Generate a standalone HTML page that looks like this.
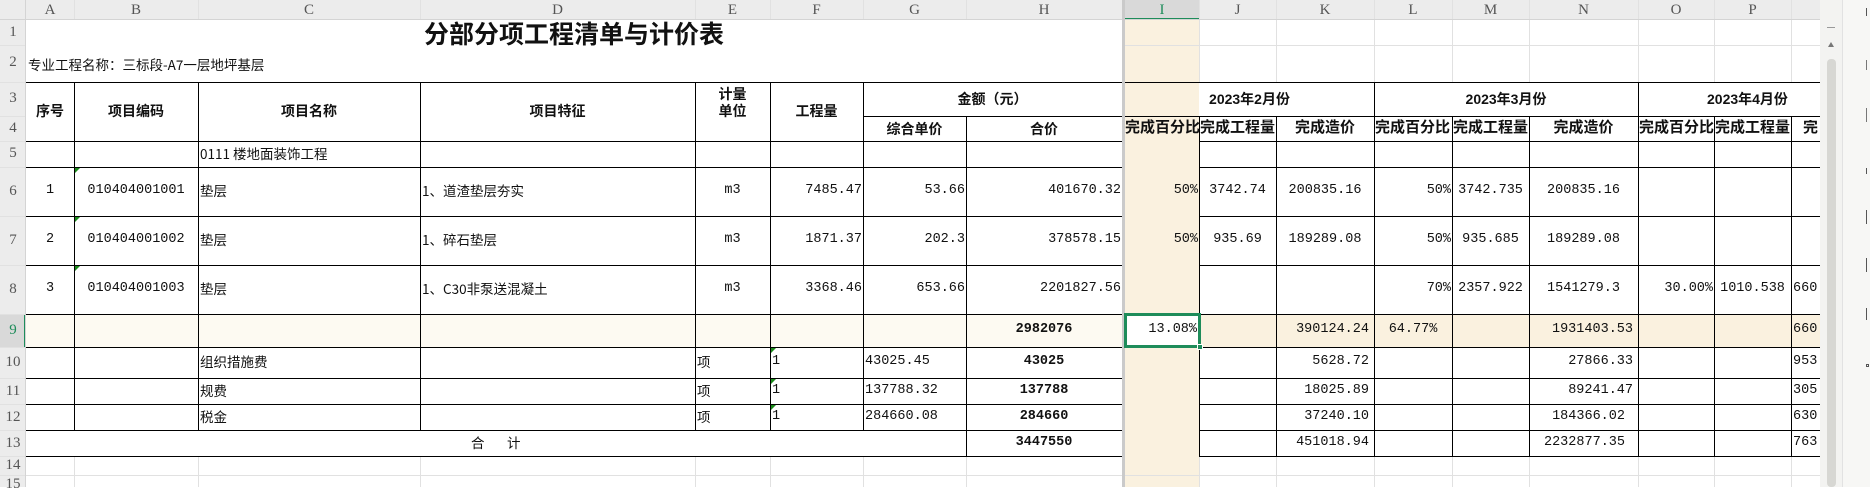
<!DOCTYPE html>
<html><head><meta charset="utf-8"><style>
*{margin:0;padding:0;box-sizing:border-box}
body{width:1870px;height:487px;overflow:hidden;background:#fff;position:relative;font-family:"Liberation Mono","Noto Sans CJK SC",monospace;font-size:13.5px;color:#111}
div{position:absolute}
.g{background:#e1e1e1}
.k{background:#000}
.t{white-space:nowrap;line-height:16px}
.c{text-align:center}
.r{text-align:right}
.b{font-weight:bold;font-family:"Liberation Sans","Noto Sans CJK SC",sans-serif;font-size:14px}
.bn{font-weight:bold}
.cj{font-family:"Noto Sans CJK SC",sans-serif;font-size:13.5px;margin-top:-1px}
.hd{color:#555;font-family:"Liberation Serif",serif;font-size:15px;text-align:center;line-height:20px}
.rn{color:#555;font-family:"Liberation Serif",serif;font-size:15px;text-align:center;width:26px;left:0}
</style></head><body>
<div style="left:1125px;top:20px;width:74px;height:467px;background:#faf1df"></div>
<div style="left:26px;top:314px;width:1096px;height:33px;background:#fdfaf2"></div>
<div style="left:1199px;top:314px;width:621px;height:33px;background:#faf1df"></div>
<div style="left:0;top:0;width:1820px;height:20px;background:#ececec"></div>
<div style="left:1125px;top:0;width:74px;height:20px;background:#d9d9d9"></div>
<div style="left:1125px;top:18px;width:74px;height:2px;background:#1e8c5a"></div>
<div style="left:0;top:20px;width:26px;height:467px;background:#ececec"></div>
<div style="left:0;top:314px;width:26px;height:33px;background:#d9d9d9"></div>
<div style="left:24px;top:314px;width:2px;height:33px;background:#1e8c5a"></div>
<div style="left:0;top:19px;width:1820px;height:1px;background:#d4d4d4"></div>
<div style="left:25px;top:0;width:1px;height:487px;background:#d4d4d4"></div>
<div class="g" style="left:74px;top:0;width:1px;height:19px"></div>
<div class="g" style="left:198px;top:0;width:1px;height:19px"></div>
<div class="g" style="left:420px;top:0;width:1px;height:19px"></div>
<div class="g" style="left:695px;top:0;width:1px;height:19px"></div>
<div class="g" style="left:770px;top:0;width:1px;height:19px"></div>
<div class="g" style="left:863px;top:0;width:1px;height:19px"></div>
<div class="g" style="left:966px;top:0;width:1px;height:19px"></div>
<div class="g" style="left:1199px;top:0;width:1px;height:19px"></div>
<div class="g" style="left:1276px;top:0;width:1px;height:19px"></div>
<div class="g" style="left:1374px;top:0;width:1px;height:19px"></div>
<div class="g" style="left:1452px;top:0;width:1px;height:19px"></div>
<div class="g" style="left:1529px;top:0;width:1px;height:19px"></div>
<div class="g" style="left:1638px;top:0;width:1px;height:19px"></div>
<div class="g" style="left:1714px;top:0;width:1px;height:19px"></div>
<div class="g" style="left:1791px;top:0;width:1px;height:19px"></div>
<div class="hd" style="left:26px;top:0;width:48px">A</div>
<div class="hd" style="left:74px;top:0;width:124px">B</div>
<div class="hd" style="left:198px;top:0;width:222px">C</div>
<div class="hd" style="left:420px;top:0;width:275px">D</div>
<div class="hd" style="left:695px;top:0;width:75px">E</div>
<div class="hd" style="left:770px;top:0;width:93px">F</div>
<div class="hd" style="left:863px;top:0;width:103px">G</div>
<div class="hd" style="left:966px;top:0;width:156px">H</div>
<div class="hd" style="left:1125px;top:0;width:74px;color:#1e8c5a">I</div>
<div class="hd" style="left:1199px;top:0;width:77px">J</div>
<div class="hd" style="left:1276px;top:0;width:98px">K</div>
<div class="hd" style="left:1374px;top:0;width:78px">L</div>
<div class="hd" style="left:1452px;top:0;width:77px">M</div>
<div class="hd" style="left:1529px;top:0;width:109px">N</div>
<div class="hd" style="left:1638px;top:0;width:76px">O</div>
<div class="hd" style="left:1714px;top:0;width:77px">P</div>
<div class="rn" style="top:24px">1</div>
<div class="rn" style="top:54px">2</div>
<div class="rn" style="top:90px">3</div>
<div class="rn" style="top:120px">4</div>
<div class="rn" style="top:145px">5</div>
<div class="rn" style="top:183px">6</div>
<div class="rn" style="top:232px">7</div>
<div class="rn" style="top:281px">8</div>
<div class="rn" style="top:322px;color:#1e8c5a">9</div>
<div class="rn" style="top:354px">10</div>
<div class="rn" style="top:383px">11</div>
<div class="rn" style="top:409px">12</div>
<div class="rn" style="top:435px">13</div>
<div class="rn" style="top:457px">14</div>
<div class="rn" style="top:476px">15</div>
<div class="g" style="left:0;top:45px;width:25px;height:1px"></div>
<div class="g" style="left:0;top:82px;width:25px;height:1px"></div>
<div class="g" style="left:0;top:116px;width:25px;height:1px"></div>
<div class="g" style="left:0;top:141px;width:25px;height:1px"></div>
<div class="g" style="left:0;top:167px;width:25px;height:1px"></div>
<div class="g" style="left:0;top:216px;width:25px;height:1px"></div>
<div class="g" style="left:0;top:265px;width:25px;height:1px"></div>
<div class="g" style="left:0;top:314px;width:25px;height:1px"></div>
<div class="g" style="left:0;top:347px;width:25px;height:1px"></div>
<div class="g" style="left:0;top:378px;width:25px;height:1px"></div>
<div class="g" style="left:0;top:404px;width:25px;height:1px"></div>
<div class="g" style="left:0;top:430px;width:25px;height:1px"></div>
<div class="g" style="left:0;top:456px;width:25px;height:1px"></div>
<div class="g" style="left:0;top:475px;width:25px;height:1px"></div>
<div class="g" style="left:1125px;top:45px;width:695px;height:1px"></div>
<div class="g" style="left:1199px;top:20px;width:1px;height:62px"></div>
<div class="g" style="left:1276px;top:20px;width:1px;height:62px"></div>
<div class="g" style="left:1374px;top:20px;width:1px;height:62px"></div>
<div class="g" style="left:1452px;top:20px;width:1px;height:62px"></div>
<div class="g" style="left:1529px;top:20px;width:1px;height:62px"></div>
<div class="g" style="left:1638px;top:20px;width:1px;height:62px"></div>
<div class="g" style="left:1714px;top:20px;width:1px;height:62px"></div>
<div class="g" style="left:1791px;top:20px;width:1px;height:62px"></div>
<div class="g" style="left:26px;top:475px;width:1794px;height:1px"></div>
<div class="g" style="left:74px;top:456px;width:1px;height:31px"></div>
<div class="g" style="left:198px;top:456px;width:1px;height:31px"></div>
<div class="g" style="left:420px;top:456px;width:1px;height:31px"></div>
<div class="g" style="left:695px;top:456px;width:1px;height:31px"></div>
<div class="g" style="left:770px;top:456px;width:1px;height:31px"></div>
<div class="g" style="left:863px;top:456px;width:1px;height:31px"></div>
<div class="g" style="left:966px;top:456px;width:1px;height:31px"></div>
<div class="g" style="left:1199px;top:456px;width:1px;height:31px"></div>
<div class="g" style="left:1276px;top:456px;width:1px;height:31px"></div>
<div class="g" style="left:1374px;top:456px;width:1px;height:31px"></div>
<div class="g" style="left:1452px;top:456px;width:1px;height:31px"></div>
<div class="g" style="left:1529px;top:456px;width:1px;height:31px"></div>
<div class="g" style="left:1638px;top:456px;width:1px;height:31px"></div>
<div class="g" style="left:1714px;top:456px;width:1px;height:31px"></div>
<div class="g" style="left:1791px;top:456px;width:1px;height:31px"></div>
<div class="k" style="left:26px;top:82px;width:1794px;height:1px"></div>
<div class="k" style="left:863px;top:116px;width:259px;height:1px"></div>
<div class="k" style="left:1125px;top:116px;width:695px;height:1px"></div>
<div class="k" style="left:26px;top:141px;width:1096px;height:1px"></div>
<div class="k" style="left:1199px;top:141px;width:621px;height:1px"></div>
<div class="k" style="left:26px;top:167px;width:1096px;height:1px"></div>
<div class="k" style="left:1199px;top:167px;width:621px;height:1px"></div>
<div class="k" style="left:26px;top:216px;width:1096px;height:1px"></div>
<div class="k" style="left:1199px;top:216px;width:621px;height:1px"></div>
<div class="k" style="left:26px;top:265px;width:1096px;height:1px"></div>
<div class="k" style="left:1199px;top:265px;width:621px;height:1px"></div>
<div class="k" style="left:26px;top:314px;width:1096px;height:1px"></div>
<div class="k" style="left:1199px;top:314px;width:621px;height:1px"></div>
<div class="k" style="left:26px;top:347px;width:1096px;height:1px"></div>
<div class="k" style="left:1199px;top:347px;width:621px;height:1px"></div>
<div class="k" style="left:26px;top:378px;width:1096px;height:1px"></div>
<div class="k" style="left:1199px;top:378px;width:621px;height:1px"></div>
<div class="k" style="left:26px;top:404px;width:1096px;height:1px"></div>
<div class="k" style="left:1199px;top:404px;width:621px;height:1px"></div>
<div class="k" style="left:26px;top:430px;width:1096px;height:1px"></div>
<div class="k" style="left:1199px;top:430px;width:621px;height:1px"></div>
<div class="k" style="left:26px;top:456px;width:1096px;height:1px"></div>
<div class="k" style="left:1199px;top:456px;width:621px;height:1px"></div>
<div class="k" style="left:74px;top:82px;width:1px;height:348px"></div>
<div class="k" style="left:198px;top:82px;width:1px;height:348px"></div>
<div class="k" style="left:420px;top:82px;width:1px;height:348px"></div>
<div class="k" style="left:695px;top:82px;width:1px;height:348px"></div>
<div class="k" style="left:770px;top:82px;width:1px;height:348px"></div>
<div class="k" style="left:863px;top:82px;width:1px;height:348px"></div>
<div class="k" style="left:966px;top:116px;width:1px;height:340px"></div>
<div class="k" style="left:1199px;top:116px;width:1px;height:340px"></div>
<div class="k" style="left:1276px;top:116px;width:1px;height:340px"></div>
<div class="k" style="left:1374px;top:82px;width:1px;height:374px"></div>
<div class="k" style="left:1452px;top:116px;width:1px;height:340px"></div>
<div class="k" style="left:1529px;top:116px;width:1px;height:340px"></div>
<div class="k" style="left:1638px;top:82px;width:1px;height:374px"></div>
<div class="k" style="left:1714px;top:116px;width:1px;height:340px"></div>
<div class="k" style="left:1791px;top:116px;width:1px;height:340px"></div>
<div style="left:1122px;top:0;width:3px;height:487px;background:#cacaca"></div>
<div style="left:1124px;top:313px;width:77px;height:35px;border:3px solid #1e8c5a;background:#fff"></div>
<div style="left:1197px;top:344px;width:6px;height:6px;background:#1e8c5a;border:1px solid #fff"></div>
<div style="left:75px;top:168px;width:0;height:0;border-top:5px solid #1a8a1a;border-right:5px solid transparent"></div>
<div style="left:75px;top:217px;width:0;height:0;border-top:5px solid #1a8a1a;border-right:5px solid transparent"></div>
<div style="left:75px;top:266px;width:0;height:0;border-top:5px solid #1a8a1a;border-right:5px solid transparent"></div>
<div style="left:771px;top:348px;width:0;height:0;border-top:5px solid #1a8a1a;border-right:5px solid transparent"></div>
<div style="left:771px;top:379px;width:0;height:0;border-top:5px solid #1a8a1a;border-right:5px solid transparent"></div>
<div style="left:771px;top:405px;width:0;height:0;border-top:5px solid #1a8a1a;border-right:5px solid transparent"></div>
<div class="t" style="left:26px;top:20px;width:1096px;text-align:center;font-family:'Noto Sans CJK SC',sans-serif;font-weight:bold;font-size:25px;line-height:26px">分部分项工程清单与计价表</div>
<div class="t cj" style="left:28px;top:57px">专业工程名称：三标段-A7一层地坪基层</div>
<div class="t b c" style="left:26px;top:103px;width:48px">序号</div>
<div class="t b c" style="left:74px;top:103px;width:124px">项目编码</div>
<div class="t b c" style="left:198px;top:103px;width:222px">项目名称</div>
<div class="t b c" style="left:420px;top:103px;width:275px">项目特征</div>
<div class="t b c" style="left:695px;top:86px;width:75px;line-height:17px;white-space:normal">计量<br>单位</div>
<div class="t b c" style="left:770px;top:103px;width:93px">工程量</div>
<div class="t b c" style="left:863px;top:91px;width:259px">金额（元）</div>
<div class="t b c" style="left:863px;top:121px;width:103px">综合单价</div>
<div class="t b c" style="left:966px;top:121px;width:156px">合价</div>
<div class="t b c" style="left:1125px;top:91px;width:249px">2023年2月份</div>
<div class="t b c" style="left:1374px;top:91px;width:264px">2023年3月份</div>
<div class="t b" style="left:1707px;top:91px">2023年4月份</div>
<div class="t b" style="left:1125px;top:120px;font-size:15px">完成百分比</div>
<div class="t b" style="left:1200px;top:120px;font-size:15px">完成工程量</div>
<div class="t b c" style="left:1276px;top:120px;width:98px;font-size:15px">完成造价</div>
<div class="t b" style="left:1375px;top:120px;font-size:15px">完成百分比</div>
<div class="t b" style="left:1453px;top:120px;font-size:15px">完成工程量</div>
<div class="t b c" style="left:1529px;top:120px;width:109px;font-size:15px">完成造价</div>
<div class="t b" style="left:1639px;top:120px;font-size:15px">完成百分比</div>
<div class="t b" style="left:1715px;top:120px;font-size:15px">完成工程量</div>
<div class="t b" style="left:1803px;top:120px;font-size:15px;width:17px;overflow:hidden">完</div>
<div class="t cj" style="left:200px;top:146px">0111 楼地面装饰工程</div>
<div class="t c" style="left:26px;top:183px;width:48px">1</div>
<div class="t c" style="left:74px;top:183px;width:124px">010404001001</div>
<div class="t cj" style="left:200px;top:183px">垫层</div>
<div class="t cj" style="left:422px;top:183px">1、道渣垫层夯实</div>
<div class="t c" style="left:695px;top:183px;width:75px">m3</div>
<div class="t r" style="left:770px;top:183px;width:92px">7485.47</div>
<div class="t r" style="left:863px;top:183px;width:102px">53.66</div>
<div class="t r" style="left:966px;top:183px;width:155px">401670.32</div>
<div class="t r" style="left:1125px;top:183px;width:73px">50%</div>
<div class="t c" style="left:1199px;top:183px;width:77px">3742.74</div>
<div class="t c" style="left:1276px;top:183px;width:98px">200835.16</div>
<div class="t r" style="left:1374px;top:183px;width:77px">50%</div>
<div class="t c" style="left:1452px;top:183px;width:77px">3742.735</div>
<div class="t c" style="left:1529px;top:183px;width:109px">200835.16</div>
<div class="t c" style="left:26px;top:232px;width:48px">2</div>
<div class="t c" style="left:74px;top:232px;width:124px">010404001002</div>
<div class="t cj" style="left:200px;top:232px">垫层</div>
<div class="t cj" style="left:422px;top:232px">1、碎石垫层</div>
<div class="t c" style="left:695px;top:232px;width:75px">m3</div>
<div class="t r" style="left:770px;top:232px;width:92px">1871.37</div>
<div class="t r" style="left:863px;top:232px;width:102px">202.3</div>
<div class="t r" style="left:966px;top:232px;width:155px">378578.15</div>
<div class="t r" style="left:1125px;top:232px;width:73px">50%</div>
<div class="t c" style="left:1199px;top:232px;width:77px">935.69</div>
<div class="t c" style="left:1276px;top:232px;width:98px">189289.08</div>
<div class="t r" style="left:1374px;top:232px;width:77px">50%</div>
<div class="t c" style="left:1452px;top:232px;width:77px">935.685</div>
<div class="t c" style="left:1529px;top:232px;width:109px">189289.08</div>
<div class="t c" style="left:26px;top:281px;width:48px">3</div>
<div class="t c" style="left:74px;top:281px;width:124px">010404001003</div>
<div class="t cj" style="left:200px;top:281px">垫层</div>
<div class="t cj" style="left:422px;top:281px">1、C30非泵送混凝土</div>
<div class="t c" style="left:695px;top:281px;width:75px">m3</div>
<div class="t r" style="left:770px;top:281px;width:92px">3368.46</div>
<div class="t r" style="left:863px;top:281px;width:102px">653.66</div>
<div class="t r" style="left:966px;top:281px;width:155px">2201827.56</div>
<div class="t r" style="left:1374px;top:281px;width:77px">70%</div>
<div class="t c" style="left:1452px;top:281px;width:77px">2357.922</div>
<div class="t c" style="left:1529px;top:281px;width:109px">1541279.3</div>
<div class="t r" style="left:1638px;top:281px;width:75px">30.00%</div>
<div class="t c" style="left:1714px;top:281px;width:77px">1010.538</div>
<div class="t" style="left:1793px;top:281px;width:27px;overflow:hidden">660</div>
<div class="t c bn" style="left:966px;top:322px;width:156px">2982076</div>
<div class="t r" style="left:1125px;top:322px;width:72px">13.08%</div>
<div class="t r" style="left:1276px;top:322px;width:93px">390124.24</div>
<div class="t c" style="left:1374px;top:322px;width:78px">64.77%</div>
<div class="t r" style="left:1529px;top:322px;width:104px">1931403.53</div>
<div class="t" style="left:1793px;top:322px;width:27px;overflow:hidden">660</div>
<div class="t cj" style="left:200px;top:354px">组织措施费</div>
<div class="t cj" style="left:697px;top:354px">项</div>
<div class="t" style="left:772px;top:354px">1</div>
<div class="t" style="left:865px;top:354px">43025.45</div>
<div class="t c bn" style="left:966px;top:354px;width:156px">43025</div>
<div class="t r" style="left:1276px;top:354px;width:93px">5628.72</div>
<div class="t r" style="left:1529px;top:354px;width:104px">27866.33</div>
<div class="t" style="left:1793px;top:354px;width:27px;overflow:hidden">953</div>
<div class="t cj" style="left:200px;top:383px">规费</div>
<div class="t cj" style="left:697px;top:383px">项</div>
<div class="t" style="left:772px;top:383px">1</div>
<div class="t" style="left:865px;top:383px">137788.32</div>
<div class="t c bn" style="left:966px;top:383px;width:156px">137788</div>
<div class="t r" style="left:1276px;top:383px;width:93px">18025.89</div>
<div class="t r" style="left:1529px;top:383px;width:104px">89241.47</div>
<div class="t" style="left:1793px;top:383px;width:27px;overflow:hidden">305</div>
<div class="t cj" style="left:200px;top:409px">税金</div>
<div class="t cj" style="left:697px;top:409px">项</div>
<div class="t" style="left:772px;top:409px">1</div>
<div class="t" style="left:865px;top:409px">284660.08</div>
<div class="t c bn" style="left:966px;top:409px;width:156px">284660</div>
<div class="t r" style="left:1276px;top:409px;width:93px">37240.10</div>
<div class="t r" style="left:1529px;top:409px;width:96px">184366.02</div>
<div class="t" style="left:1793px;top:409px;width:27px;overflow:hidden">630</div>
<div class="t cj" style="left:471px;top:435px">合</div>
<div class="t cj" style="left:507px;top:435px">计</div>
<div class="t c bn" style="left:966px;top:435px;width:156px">3447550</div>
<div class="t r" style="left:1276px;top:435px;width:93px">451018.94</div>
<div class="t r" style="left:1529px;top:435px;width:96px">2232877.35</div>
<div class="t" style="left:1793px;top:435px;width:27px;overflow:hidden">763</div>
<div style="left:1820px;top:0;width:22px;height:487px;background:#f3f3f1"></div>
<div style="left:1827px;top:27px;width:8px;height:1px;background:#999"></div>
<div style="left:1828px;top:42px;width:0;height:0;border-left:3px solid transparent;border-right:3px solid transparent;border-bottom:5px solid #777"></div>
<div style="left:1827px;top:59px;width:9px;height:428px;background:#d7d7d3;border-radius:4px"></div>
<div style="left:1842px;top:0;width:28px;height:487px;background:#f7f7f5;border-left:1px solid #e2e2e2"></div>
<div style="left:1866px;top:8px;width:4px;height:8px;border-left:1px solid #555"></div>
<div style="left:1866px;top:60px;width:4px;height:10px;border-left:1px solid #777"></div>
<div style="left:1866px;top:108px;width:4px;height:14px;border-left:1px solid #777"></div>
<div style="left:1866px;top:168px;width:4px;height:6px;border-left:1px solid #555"></div>
<div style="left:1866px;top:210px;width:4px;height:14px;border-left:1px solid #555"></div>
<div style="left:1866px;top:258px;width:4px;height:14px;border-left:1px solid #555"></div>
<div style="left:1866px;top:308px;width:4px;height:12px;border-left:1px solid #555"></div>
<div style="left:1866px;top:364px;width:3px;height:3px;border:1px solid #555"></div>
</body></html>
